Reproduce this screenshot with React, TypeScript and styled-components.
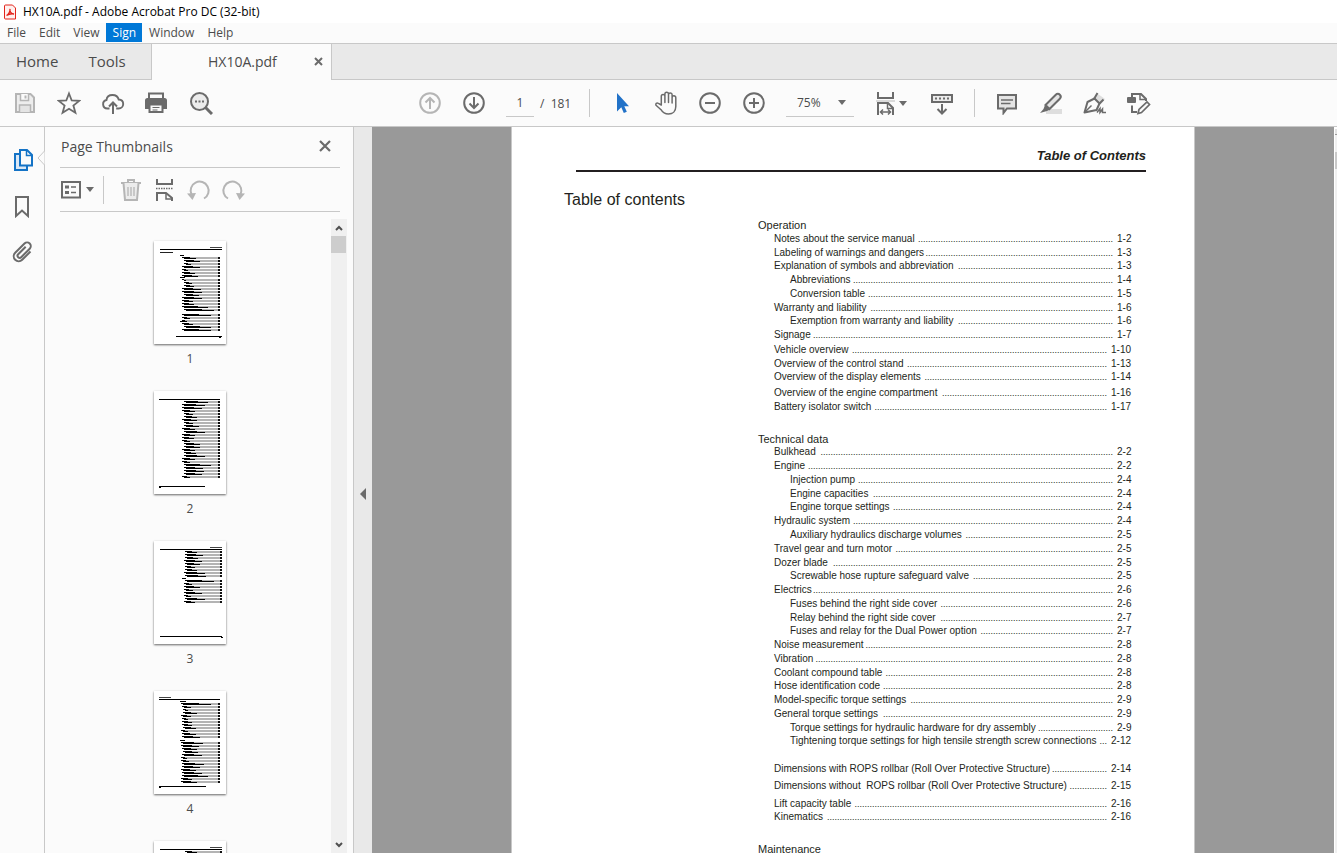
import React from "react";
import styled, { createGlobalStyle } from "styled-components";

const UI = '"Open Sans", "Noto Sans", sans-serif';
const DOC = '"Liberation Sans", Arial, sans-serif';
const INK = "#6b6b6b";
const FAINT = "#b5b5b5";
const LINE = "#c8c8c8";
const SURFACE = "#fbfbfb";

const GlobalStyle = createGlobalStyle`
  * { box-sizing: border-box; }
  body { margin: 0; background: #fff; font-family: ${UI}; color: #4b4b4b; }
  button, input, select { font: inherit; color: inherit; }
  ul, ol { list-style: none; margin: 0; padding: 0; }
`;

/* ---------- window chrome ---------- */

const Window = styled.div`
  display: flex;
  flex-direction: column;
  height: 100vh;
  overflow: hidden;
`;

const TitleBar = styled.header`
  display: flex;
  align-items: center;
  gap: 7px;
  flex: none;
  height: 23px;
  padding-left: 4px;
  background: #fff;
`;

const WindowTitle = styled.h1`
  margin: 0;
  font-size: 12px;
  font-weight: 400;
  line-height: 20px;
  color: #000;
`;

const MenuBar = styled.nav`
  display: flex;
  flex: none;
  height: 20px;
  background: ${SURFACE};
`;

const MenuItem = styled.button<{ $active?: boolean }>`
  height: 19px;
  padding: 0 6px 0 7px;
  border: 0;
  font-size: 12px;
  line-height: 19px;
  background: ${(p) => (p.$active ? "#0078d7" : "transparent")};
  color: ${(p) => (p.$active ? "#fff" : "#4b4b4b")};
`;

const TabBar = styled.div`
  display: flex;
  flex: none;
  height: 37px;
  border-top: 1px solid ${LINE};
  background: #e9e9e9;
`;

const HomeTabs = styled.div`
  display: flex;
  gap: 30px;
  width: 151px;
  padding: 0 0 2px 16px;
  border-bottom: 1px solid ${LINE};
`;

const HomeTab = styled.button`
  padding: 0;
  border: 0;
  background: none;
  font-size: 15px;
`;

const FileTab = styled.div`
  display: flex;
  align-items: center;
  width: 181px;
  padding: 0 7px 2px 56px;
  border: solid ${LINE};
  border-width: 0 1px;
  background: ${SURFACE};
  font-size: 14px;
`;

const TabClose = styled.button`
  display: flex;
  margin-left: auto;
  padding: 0;
  border: 0;
  background: none;
`;

const TabFiller = styled.div`
  flex: 1;
  border-bottom: 1px solid ${LINE};
`;

/* ---------- toolbar ---------- */

const ToolBar = styled.div`
  display: flex;
  align-items: center;
  flex: none;
  height: 47px;
  padding: 0 0 0 13px;
  border-bottom: 1px solid ${LINE};
  background: ${SURFACE};
`;

const ToolGroup = styled.div`
  display: flex;
  align-items: center;
  gap: 20px;
`;

const Spacer = styled.div<{ $grow: number }>`
  flex: ${(p) => p.$grow} 1 0;
`;

const IconButton = styled.button`
  display: flex;
  align-items: center;
  flex: none;
  padding: 0;
  border: 0;
  background: none;
  svg { display: block; }
`;

const MenuIconButton = styled(IconButton)`
  gap: 1px;
  padding-right: 3px;
`;

const OptionsButton = styled(IconButton)`
  gap: 5px;
`;

const Divider = styled.span`
  width: 1px;
  height: 28px;
  background: ${LINE};
`;

const PageField = styled.div`
  display: flex;
  align-items: center;
  gap: 6px;
  width: 63px;
  font-size: 12px;
  white-space: nowrap;
`;

const PageInput = styled.input`
  width: 28px;
  height: 28px;
  padding: 0;
  border: 0;
  border-bottom: 1px solid ${LINE};
  background: none;
  text-align: center;
`;

const ZoomField = styled.div`
  display: flex;
  align-items: center;
  width: 68px;
  height: 28px;
  padding-right: 8px;
  border-bottom: 1px solid ${LINE};
`;

const ZoomSelect = styled.select`
  flex: 1;
  width: 40px;
  height: 27px;
  padding: 0 0 0 11px;
  border: 0;
  appearance: none;
  background: none;
  font-size: 12px;
`;

/* ---------- side panel ---------- */

const Workspace = styled.div`
  display: flex;
  flex: 1;
  min-height: 0;
`;

const Rail = styled.nav`
  position: relative;
  display: flex;
  flex-direction: column;
  align-items: flex-start;
  gap: 22px;
  width: 45px;
  padding: 21px 0 0 11px;
  border-right: 1px solid ${LINE};
  background: ${SURFACE};
`;

const Notch = styled.svg`
  position: absolute;
  top: 24px;
  right: -1px;
`;

const Panel = styled.section`
  display: flex;
  flex-direction: column;
  width: 309px;
  padding-left: 15px;
  border-right: 1px solid ${LINE};
  background: ${SURFACE};
`;

const PanelHeader = styled.div`
  display: flex;
  align-items: center;
  justify-content: space-between;
  flex: none;
  height: 41px;
  margin-right: 13px;
  padding: 0 8px 2px 1px;
  border-bottom: 1px solid ${LINE};
`;

const PanelTitle = styled.h2`
  margin: 0;
  font-size: 14px;
  font-weight: 400;
`;

const PanelTools = styled.div`
  display: flex;
  align-items: center;
  gap: 9px;
  flex: none;
  height: 44px;
  margin-right: 13px;
  padding-left: 1px;
  border-bottom: 1px solid ${LINE};
`;

const PageTools = styled.div`
  display: flex;
  gap: 10px;
  padding-left: 6px;
`;

const ThumbArea = styled.div`
  display: flex;
  flex: 1;
  min-height: 0;
  padding: 7px 6px 0 0;
`;

const ThumbList = styled.ol`
  display: flex;
  flex-direction: column;
  align-items: center;
  gap: 20px;
  flex: 1;
  min-height: 0;
  overflow: hidden;
  padding: 22px 0 0 0;
  margin-right: 11px;
`;

const ThumbItem = styled.li`
  flex: none;
`;

const Thumb = styled.button`
  display: flex;
  flex-direction: column;
  align-items: center;
  gap: 5px;
  height: 130px;
  padding: 0;
  border: 0;
  background: none;
  font-size: 12px;
  line-height: 20px;
  svg {
    display: block;
    flex: none;
    background: #fff;
    box-shadow: 0 1px 2px rgba(0, 0, 0, 0.6);
  }
`;

const ScrollTrack = styled.div`
  display: flex;
  flex-direction: column;
  width: 16px;
  background: #f0f0f0;
`;

const ScrollArrow = styled.button`
  display: flex;
  align-items: center;
  justify-content: center;
  width: 15px;
  height: 17px;
  padding: 0;
  border: 0;
  background: none;
`;

const ScrollThumb = styled.div`
  width: 15px;
  height: 17px;
  margin-bottom: auto;
  background: #cdcdcd;
`;

const Splitter = styled.button`
  display: flex;
  align-items: center;
  justify-content: center;
  width: 18px;
  padding: 8px 0 0 0;
  border: 0;
  background: #e9e9e9;
`;

/* ---------- document view ---------- */

const Viewer = styled.main`
  display: flex;
  justify-content: center;
  flex: 1;
  min-width: 0;
  overflow: hidden;
  background: #999;
`;

const Sheet = styled.article`
  flex: none;
  width: 684px;
  padding: 0 48px 0 52px;
  border: solid ${LINE};
  border-width: 0 1px;
  background: #fff;
  color: #231f20;
  font-family: ${DOC};
`;

const RunningHead = styled.p`
  margin: 0 0 0 12px;
  padding-top: 19px;
  height: 45px;
  border-bottom: 2px solid #231f20;
  font-size: 13px;
  font-weight: 700;
  font-style: italic;
  line-height: 20px;
  text-align: right;
`;

const DocTitle = styled.h2`
  margin: 18px 0 8px;
  font-size: 16px;
  font-weight: 400;
  line-height: 20px;
`;

const Chapter = styled.section<{ $gap: number }>`
  margin: ${(p) => p.$gap}px 15px 0 194px;
`;

const ChapterTitle = styled.h3<{ $h: number }>`
  margin: 0;
  height: ${(p) => p.$h}px;
  font-size: 11px;
  font-weight: 400;
  line-height: 14px;
`;

const Row = styled.a<{ $level: number; $h: number }>`
  display: flex;
  align-items: flex-start;
  height: ${(p) => p.$h}px;
  padding-left: ${(p) => (p.$level === 2 ? 32 : 16)}px;
  font-size: 10px;
  line-height: 14px;
  white-space: pre;
  color: inherit;
  text-decoration: none;
`;

const Leader = styled.span`
  flex: 1;
  min-width: 0;
  font-size: 9px;
  text-align: right;
`;

const Folio = styled.span<{ $wide: boolean }>`
  width: ${(p) => (p.$wide ? 20 : 14)}px;
  margin-left: 4px;
`;

const ViewScroll = styled.div`
  width: 3px;
  padding: 2px 0 0 1px;
  background: #fff;
`;

const ViewScrollCap = styled.div`
  height: 6px;
  border-bottom: 1px solid #999;
  background: #e3e3e3;
`;

const ViewScrollTrack = styled.div`
  height: 100%;
  padding-top: 17px;
  background: #f0f0f0;
`;

const ViewScrollThumb = styled.div`
  height: 17px;
  background: #c9c9c9;
`;

/* ---------- contents data ---------- */

type Entry = {
  label: string;
  page: string;
  level: 1 | 2;
  dots: number;
  height: number;
};

/* label | page | level | number of leader dots | row height */
const parse = (src: string): Entry[] =>
  src
    .trim()
    .split("\n")
    .map((line) => {
      const [label, page, level, dots, height] = line.split("|");
      return {
        label,
        page,
        level: Number(level) as 1 | 2,
        dots: Number(dots),
        height: Number(height),
      };
    });

const operation = parse(`
Notes about the service manual|1-2|1|78|14
Labeling of warnings and dangers|1-3|1|75|13
Explanation of symbols and abbreviation|1-3|1|62|14
Abbreviations|1-4|2|104|14
Conversion table|1-5|2|98|14
Warranty and liability|1-6|1|97|13
Exemption from warranty and liability|1-6|2|62|14
Signage|1-7|1|120|15
Vehicle overview|1-10|1|102|14
Overview of the control stand|1-13|1|80|13
Overview of the display elements|1-14|1|73|16
Overview of the engine compartment|1-16|1|66|14
Battery isolator switch|1-17|1|93|14
`);

const technical = parse(`
Bulkhead|2-2|1|117|14
Engine|2-2|1|122|14
Injection pump|2-4|2|102|14
Engine capacities|2-4|2|96|13
Engine torque settings|2-4|2|88|14
Hydraulic system|2-4|1|104|14
Auxiliary hydraulics discharge volumes|2-5|2|59|14
Travel gear and turn motor|2-5|1|87|14
Dozer blade|2-5|1|112|13
Screwable hose rupture safeguard valve|2-5|2|56|14
Electrics|2-6|1|120|14
Fuses behind the right side cover|2-6|2|69|14
Relay behind the right side cover|2-7|2|69|13
Fuses and relay for the Dual Power option|2-7|2|53|14
Noise measurement|2-8|1|99|14
Vibration|2-8|1|119|14
Coolant compound table|2-8|1|91|13
Hose identification code|2-8|1|92|14
Model-specific torque settings|2-9|1|81|14
General torque settings|2-9|1|92|14
Torque settings for hydraulic hardware for dry assembly|2-9|2|30|13
Tightening torque settings for high tensile strength screw connections|2-12|2|3|28
Dimensions with ROPS rollbar (Roll Over Protective Structure)|2-14|1|22|17
Dimensions without  ROPS rollbar (Roll Over Protective Structure)|2-15|1|15|18
Lift capacity table|2-16|1|101|13
Kinematics|2-16|1|112|14
`);

const Entries = ({ items }: { items: Entry[] }) => (
  <ol>
    {items.map((e) => (
      <li key={e.label}>
        <Row href={`#${e.page}`} $level={e.level} $h={e.height}>
          <span>{e.label}</span>
          <Leader>{".".repeat(e.dots)}</Leader>
          <Folio $wide={e.page.length > 3}>{e.page}</Folio>
        </Row>
      </li>
    ))}
  </ol>
);

/* ---------- miniature pages ---------- */

/* Each line: [y, left, right, shaded]; unshaded lines have no leader. */
type MiniLine = [number, number, number, boolean];

type MiniPage = {
  head: "left" | "right" | "none";
  title?: boolean;
  ruleY: number;
  foot: [number, number];
  right: number;
  lines: MiniLine[];
};

/* Lines three units apart from y down; an "h" prefix marks a heading. */
const run = (y: number, specs: string): MiniLine[] => {
  let at = y;
  return specs.split(" ").map((s) => {
    const heading = s.startsWith("h");
    const [l, r] = s.replace("h", "").split(",").map(Number);
    const line: MiniLine = [at, l, r, !heading];
    at += heading ? 2 : 3;
    return line;
  });
};

const miniPages: MiniPage[] = [
  {
    head: "right", title: true, ruleY: 8, foot: [22, 68], right: 66,
    lines: [
      ...run(14, "h26,32 28,42 30,46 30,37 28,46 28,34 28,41 28,44"),
      ...run(36, "h26,34 28,32 30,38 30,40 28,47 28,48 30,45 28,48 28,39 28,40 28,54 30,60"),
      ...run(73, "28,57 28,36 28,33"),
      ...run(80, "h26,33 28,39 30,57 28,57"),
    ],
  },
  {
    head: "none", ruleY: 8, foot: [5, 51], right: 66,
    lines: run(10, "30,54 28,51 28,48 28,41 30,39 30,43 28,43 30,39 30,45 28,41 30,51 28,41 28,40 28,36 30,46 30,46 28,41 30,42 30,51 28,41 28,36 30,57 30,49 30,50 30,48 28,36"),
  },
  {
    head: "right", ruleY: 8, foot: [6, 68], right: 68,
    lines: run(10, "31,43 31,49 31,44 30,48 31,46 31,41 31,43 30,51 31,52 h28,34 31,60 30,38 30,46 30,39 30,48 30,37 31,51 30,41"),
  },
  {
    head: "left", ruleY: 8, foot: [5, 52], right: 66,
    lines: [
      ...run(10, "h26,36 27,57 28,37 29,34 29,43 27,37 28,34 28,38 28,38 29,42 27,34 28,42 28,46"),
      ...run(49, "h26,35 27,49 27,45 28,43 29,44 28,48 27,33 27,35 28,50 28,46 27,42 28,48 28,54 27,38 27,43"),
    ],
  },
  {
    head: "right", ruleY: 8, foot: [6, 68], right: 68,
    lines: run(10, "31,43 31,49 31,44 30,48"),
  },
];

const MiniSheet = ({ page }: { page: MiniPage }) => (
  <svg width="72" height="103" viewBox="0 0 72 103" shapeRendering="crispEdges" aria-hidden="true">
    {page.head !== "none" && (
      <rect x={page.head === "left" ? 5 : 56} y="6" width="12" height="1" fill="#444" />
    )}
    <rect x={page.foot[0] < 6 ? 5 : 6} y={page.ruleY} width={page.foot[0] < 6 ? 61 : 62} height="1" fill="#000" />
    {page.title && <rect x="6" y="11" width="13" height="1" fill="#222" />}
    {page.lines.map(([y, l, r, shaded], i) => (
      <g key={i}>
        {shaded && <rect x={l + 2} y={y} width={page.right - l - 2} height="2" fill="#b4b4b4" />}
        {shaded && <rect x={page.right - 2} y={y} width="2" height="2" fill="#111" />}
        <rect x={l} y={y} width={Math.round((r - l) * 0.6)} height="1" fill="#000" />
        {shaded && <rect x={l + 2} y={y + 1} width={r - l - 2} height="1" fill="#000" />}
      </g>
    ))}
    <rect x={page.foot[0]} y="95" width={page.foot[1] - page.foot[0]} height="1" fill="#000" />
    <rect x={page.foot[0] < 6 ? 5 : page.right - 1} y="96" width="2" height="1" fill="#000" />
  </svg>
);

/* ---------- icons ---------- */

type IconProps = { color?: string; children: React.ReactNode };

const Icon = ({ color = INK, children }: IconProps) => (
  <svg width="24" height="24" viewBox="0 0 24 24" fill="none" stroke={color} strokeWidth="2" aria-hidden="true">
    {children}
  </svg>
);

const Caret = () => (
  <svg width="8" height="5" viewBox="0 0 8 5" aria-hidden="true">
    <path d="M0 0h8L4 5z" fill={INK} />
  </svg>
);

const SaveIcon = () => (
  <Icon color={FAINT}>
    <path d="M3 3h14.500l3.500 3.500V21H3z" fill="#ededed" />
    <path d="M7.500 3v6.500h8V3" fill="#fbfbfb" strokeWidth="1.500" />
    <path d="M12.500 4.500v3" />
    <path d="M6.500 21v-7h11v7" fill="#e4e4e4" strokeWidth="1.500" />
  </Icon>
);

const StarIcon = () => (
  <Icon>
    <path d="M12 2.500l2.700 7 7.500.4-5.800 4.700 2 7.200L12 17.700l-6.400 4.100 2-7.200-5.800-4.700 7.500-.4z" strokeWidth="1.800" />
  </Icon>
);

const CloudIcon = () => (
  <Icon>
    <path d="M8.500 17.500H6.300A4.300 4.300 0 0 1 5.500 9c.3-3 2.800-5 6-5s5.500 1.800 6.200 4.500c2.800.1 4.500 2 4.500 4.500s-2 4.500-4.500 4.500h-2.500" strokeWidth="1.900" />
    <path d="M12 23V12M8 15.500l4-4 4 4" />
  </Icon>
);

const PrintIcon = () => (
  <Icon>
    <path d="M4 7V2.500h14V7" />
    <path d="M0 9.500A2.500 2.500 0 0 1 2.500 7h17A2.500 2.500 0 0 1 22 9.500V18h-4v-4H4v4H0z" fill={INK} stroke="none" />
    <path d="M4.500 13.500h13v7.500h-13z" fill="#fbfbfb" />
    <path d="M7.500 16.500h7M7.500 19h5" strokeWidth="1" />
  </Icon>
);

const SearchIcon = () => (
  <Icon>
    <circle cx="10.500" cy="10.500" r="8.500" fill="#ececec" />
    <path d="M16.500 16.500l6.500 6.500" strokeWidth="3" />
    <path d="M6 10.500h2M9.500 10.500h2M13 10.500h2" />
  </Icon>
);

const ArrowCircle = ({ down }: { down?: boolean }) => (
  <Icon color={down ? INK : FAINT}>
    <circle cx="12" cy="12" r="9.800" />
    {down ? <path d="M12 6v11M7.500 12.500l4.500 4.500 4.500-4.500" /> : <path d="M12 18V7M7.500 11.500L12 7l4.500 4.500" />}
  </Icon>
);

const ZoomCircle = ({ plus }: { plus?: boolean }) => (
  <Icon>
    <circle cx="12" cy="12" r="9.800" />
    <path d={plus ? "M7 12h10M12 7v10" : "M7 12h10"} />
  </Icon>
);

const PointerIcon = () => (
  <Icon>
    <path d="M7 2v18.500l4.300-4.300 2.500 5.800 3-1.300-2.500-5.500H19z" fill="#2272c8" stroke="none" />
  </Icon>
);

const HandIcon = () => (
  <Icon>
    <path
      d="M7.300 14V5.200a1.800 1.800 0 0 1 3.600 0V11.500V3a1.800 1.800 0 0 1 3.600 0v8.500V3.700a1.800 1.800 0 0 1 3.600 0v8.300V6.700a1.800 1.800 0 0 1 3.700 0V15.500c0 4.500-3 7.500-7.300 7.500-4 0-6-1.700-7.500-4.300L2 14.300c-.8-1.600.8-3 2.400-2z"
      strokeWidth="1.500" strokeLinejoin="round"
    />
  </Icon>
);

const FitWidthIcon = () => (
  <Icon>
    <path d="M4 1v6h15V1" />
    <path d="M2 10h19" stroke="#dadada" />
    <path d="M4 24V12h10l5 5v7" />
    <path d="M13.500 12v5.500H19" strokeWidth="1.500" />
    <path d="M7 21h9M9 18.500L6.500 21 9 23.500M14 18.500l2.500 2.500-2.500 2.500" strokeWidth="1.500" />
  </Icon>
);

const ScrollingIcon = () => (
  <Icon>
    <rect x="2" y="4" width="20" height="7" fill="#ececec" />
    <path d="M5 7.500h14" strokeDasharray="2 2" />
    <path d="M12 13v9M7.500 18l4.500 4.500 4.500-4.500" />
  </Icon>
);

const CommentIcon = () => (
  <Icon>
    <path d="M3 4h18v13.500h-9L8.500 22v-4.500H3z" fill="#e4e4e4" />
    <path d="M6 9h12M6 12.500h9.500" strokeWidth="1.300" />
  </Icon>
);

const HighlightIcon = () => (
  <Icon>
    <path d="M7 18h16v5H7z" fill="#dedede" stroke="none" />
    <path d="M6.500 14L16.800 3.700a2.500 2.500 0 0 1 4 4L10.500 18z" fill="#e4e4e4" />
    <path d="M6 14l5 4.500-3 1.500-7 2 3.500-4z" fill={INK} stroke="none" />
  </Icon>
);

const PenIcon = () => (
  <Icon>
    <path d="M15 3l7 5-4 5-7-6z" fill="#dedede" stroke="none" />
    <path d="M1.500 21.500L4.500 11l7-3.500 5 5-3 6.500z" fill="#fbfbfb" strokeLinejoin="round" />
    <path d="M11 8l3.500-6M16.500 12.500l4-4" />
    <path d="M1.500 21.500l7-7" strokeWidth="1.500" />
    <path d="M14 21.500l3-4v4l2.500-3.500v3.500h3.500" strokeWidth="1.500" />
  </Icon>
);

const EditDocIcon = () => (
  <Icon>
    <rect x="0" y="6" width="9" height="6" rx="1" fill={INK} stroke="none" />
    <path d="M5 6V3h9l5 5v2M5 14.500V21h5" />
    <path d="M13 3v5.500h6" strokeWidth="1.500" />
    <path d="M11 22.500l1-4L20 11l2.500 2.500-8 8z" fill="#fbfbfb" strokeWidth="1.700" />
  </Icon>
);

const PagesIcon = () => (
  <Icon color="#1473c6">
    <path d="M8 6H4v16h12v-4" fill="#dbe8f6" />
    <path d="M9 2h7l5 5v10.500H9z" fill="#fbfbfb" />
    <path d="M15.500 2v5.500H21" strokeWidth="1.500" />
  </Icon>
);

const BookmarkIcon = () => (
  <Icon>
    <path d="M5 3h12v19l-6-5.500L5 22z" />
  </Icon>
);

const ClipIcon = () => (
  <Icon>
    <path
      d="M19.500 11.500l-8.300 8.300a4.900 4.900 0 0 1-7-7l9.300-9.300a3.600 3.600 0 0 1 5.200 5.200l-8.500 8.500a2 2 0 0 1-3-3l7.500-7.500"
    />
  </Icon>
);

const CloseIcon = () => (
  <svg width="14" height="14" viewBox="0 0 14 14" aria-hidden="true">
    <path d="M2 2l10 10M12 2L2 12" stroke={INK} strokeWidth="2.200" />
  </svg>
);

const OptionsIcon = () => (
  <svg width="20" height="18" viewBox="0 0 20 18" fill="none" aria-hidden="true">
    <rect x="1" y="1" width="18" height="15.500" stroke={INK} strokeWidth="2" />
    <path d="M4 6h4M4 11.500h4" stroke={INK} strokeWidth="3" />
    <path d="M10 6h5M10 11.500h5" stroke={INK} strokeWidth="1.500" />
  </svg>
);

const TrashIcon = () => (
  <Icon color={FAINT}>
    <path d="M2 5h20M9 5V2h6v3" />
    <path d="M4.500 5l1.500 17h12l1.500-17" fill="#ececec" />
    <path d="M9 9v9M12 9v9M15 9v9" strokeWidth="1.300" />
  </Icon>
);

const SplitIcon = () => (
  <Icon>
    <path d="M4 1v5h15V1M4 23v-8h9l6 5v3" />
    <path d="M3 10.500h17" strokeWidth="1.500" strokeDasharray="1.500 1" />
    <path d="M13 15v6h6" strokeWidth="1.500" />
  </Icon>
);

const TurnIcon = ({ right }: { right?: boolean }) => (
  <Icon color={FAINT}>
    <g transform={right ? "matrix(-1 0 0 1 24 0)" : undefined}>
      <path d="M17 20.500a9 9 0 1 0-12.500-4" />
      <path d="M0 15.500l9-.5-3.500 7z" fill={FAINT} stroke="none" />
    </g>
  </Icon>
);

const Chevron = ({ down }: { down?: boolean }) => (
  <svg width="8" height="6" viewBox="0 0 8 6" fill="none" aria-hidden="true">
    <path d={down ? "M1 1l3 3 3-3" : "M1 5l3-3 3 3"} stroke="#505050" strokeWidth="2" />
  </svg>
);

const AppLogo = () => (
  <svg width="12" height="16" viewBox="0 0 12 16" fill="none" aria-hidden="true">
    <path d="M1.500 1h7L11.500 4v11h-10a1 1 0 0 1-1-1V2a1 1 0 0 1 1-1z" fill="#fff0ee" stroke="#e2231a" />
    <path d="M2.500 11.500c2-1 3.800-4 3.500-6.500-.5 2.500 1 5 4 5-2.500-.6-5 0-7.500 1.500z" stroke="#e2231a" strokeWidth="1.300" />
  </svg>
);

const MENUS = ["File", "Edit", "View", "Sign", "Window", "Help"];

export default function App() {
  return (
    <Window>
      <GlobalStyle />
      <TitleBar>
        <AppLogo />
        <WindowTitle>HX10A.pdf - Adobe Acrobat Pro DC (32-bit)</WindowTitle>
      </TitleBar>
      <MenuBar aria-label="Menu">
        {MENUS.map((m) => (
          <MenuItem key={m} type="button" $active={m === "Sign"}>{m}</MenuItem>
        ))}
      </MenuBar>
      <TabBar>
        <HomeTabs>
          <HomeTab type="button">Home</HomeTab>
          <HomeTab type="button">Tools</HomeTab>
        </HomeTabs>
        <FileTab>
          <span>HX10A.pdf</span>
          <TabClose type="button" aria-label="Close tab">
            <svg width="11" height="9" viewBox="0 0 11 9" aria-hidden="true">
              <path d="M2 1l7 7M9 1L2 8" stroke={INK} strokeWidth="2" />
            </svg>
          </TabClose>
        </FileTab>
        <TabFiller />
      </TabBar>

      <ToolBar role="toolbar" aria-label="Main tools">
        <ToolGroup>
          <IconButton type="button" aria-label="Save"><SaveIcon /></IconButton>
          <IconButton type="button" aria-label="Star"><StarIcon /></IconButton>
          <IconButton type="button" aria-label="Upload"><CloudIcon /></IconButton>
          <IconButton type="button" aria-label="Print"><PrintIcon /></IconButton>
          <IconButton type="button" aria-label="Find"><SearchIcon /></IconButton>
        </ToolGroup>
        <Spacer $grow={205} />
        <ToolGroup>
          <IconButton type="button" aria-label="Previous page"><ArrowCircle /></IconButton>
          <IconButton type="button" aria-label="Next page"><ArrowCircle down /></IconButton>
          <PageField>
            <PageInput aria-label="Page number" defaultValue="1" />
            <span>/&nbsp; 181</span>
          </PageField>
          <Divider />
          <IconButton type="button" aria-label="Select"><PointerIcon /></IconButton>
          <IconButton type="button" aria-label="Pan"><HandIcon /></IconButton>
          <IconButton type="button" aria-label="Zoom out"><ZoomCircle /></IconButton>
          <IconButton type="button" aria-label="Zoom in"><ZoomCircle plus /></IconButton>
          <ZoomField>
            <ZoomSelect aria-label="Zoom level" defaultValue="75%">
              <option>50%</option>
              <option>75%</option>
              <option>100%</option>
            </ZoomSelect>
            <Caret />
          </ZoomField>
          <MenuIconButton type="button" aria-label="Fit width"><FitWidthIcon /><Caret /></MenuIconButton>
          <IconButton type="button" aria-label="Scrolling mode"><ScrollingIcon /></IconButton>
          <Divider />
          <IconButton type="button" aria-label="Comment"><CommentIcon /></IconButton>
          <IconButton type="button" aria-label="Highlight"><HighlightIcon /></IconButton>
          <IconButton type="button" aria-label="Sign document"><PenIcon /></IconButton>
          <IconButton type="button" aria-label="Edit document"><EditDocIcon /></IconButton>
        </ToolGroup>
        <Spacer $grow={186} />
      </ToolBar>

      <Workspace>
        <Rail aria-label="Navigation panes">
          <IconButton type="button" aria-label="Page thumbnails"><PagesIcon /></IconButton>
          <IconButton type="button" aria-label="Bookmarks"><BookmarkIcon /></IconButton>
          <IconButton type="button" aria-label="Attachments"><ClipIcon /></IconButton>
          <Notch width="8" height="14" viewBox="0 0 8 14" aria-hidden="true">
            <path d="M7.500 0L1 7l6.500 7" fill={SURFACE} stroke={LINE} />
          </Notch>
        </Rail>
        <Panel>
          <PanelHeader>
            <PanelTitle>Page Thumbnails</PanelTitle>
            <IconButton type="button" aria-label="Close panel"><CloseIcon /></IconButton>
          </PanelHeader>
          <PanelTools>
            <OptionsButton type="button" aria-label="Options"><OptionsIcon /><Caret /></OptionsButton>
            <Divider />
            <PageTools>
              <IconButton type="button" aria-label="Delete pages"><TrashIcon /></IconButton>
              <IconButton type="button" aria-label="Split pages"><SplitIcon /></IconButton>
              <IconButton type="button" aria-label="Rotate left"><TurnIcon /></IconButton>
              <IconButton type="button" aria-label="Rotate right"><TurnIcon right /></IconButton>
            </PageTools>
          </PanelTools>
          <ThumbArea>
            <ThumbList>
              {miniPages.map((p, i) => (
                <ThumbItem key={i}>
                  <Thumb type="button">
                    <MiniSheet page={p} />
                    {i + 1}
                  </Thumb>
                </ThumbItem>
              ))}
            </ThumbList>
            <ScrollTrack>
              <ScrollArrow type="button" aria-label="Scroll up"><Chevron /></ScrollArrow>
              <ScrollThumb />
              <ScrollArrow type="button" aria-label="Scroll down"><Chevron down /></ScrollArrow>
            </ScrollTrack>
          </ThumbArea>
        </Panel>
        <Splitter type="button" aria-label="Collapse panel">
          <svg width="6" height="12" viewBox="0 0 6 12" aria-hidden="true">
            <path d="M6 0v12L0 6z" fill={INK} />
          </svg>
        </Splitter>
        <Viewer>
          <Sheet>
            <RunningHead>Table of Contents</RunningHead>
            <DocTitle>Table of contents</DocTitle>
            <Chapter $gap={8}>
              <ChapterTitle $h={14}>Operation</ChapterTitle>
              <Entries items={operation} />
            </Chapter>
            <Chapter $gap={18}>
              <ChapterTitle $h={13}>Technical data</ChapterTitle>
              <Entries items={technical} />
            </Chapter>
            <Chapter $gap={18}>
              <ChapterTitle $h={14}>Maintenance</ChapterTitle>
            </Chapter>
          </Sheet>
        </Viewer>
        <ViewScroll>
          <ViewScrollCap />
          <ViewScrollTrack>
            <ViewScrollThumb />
          </ViewScrollTrack>
        </ViewScroll>
      </Workspace>
    </Window>
  );
}
